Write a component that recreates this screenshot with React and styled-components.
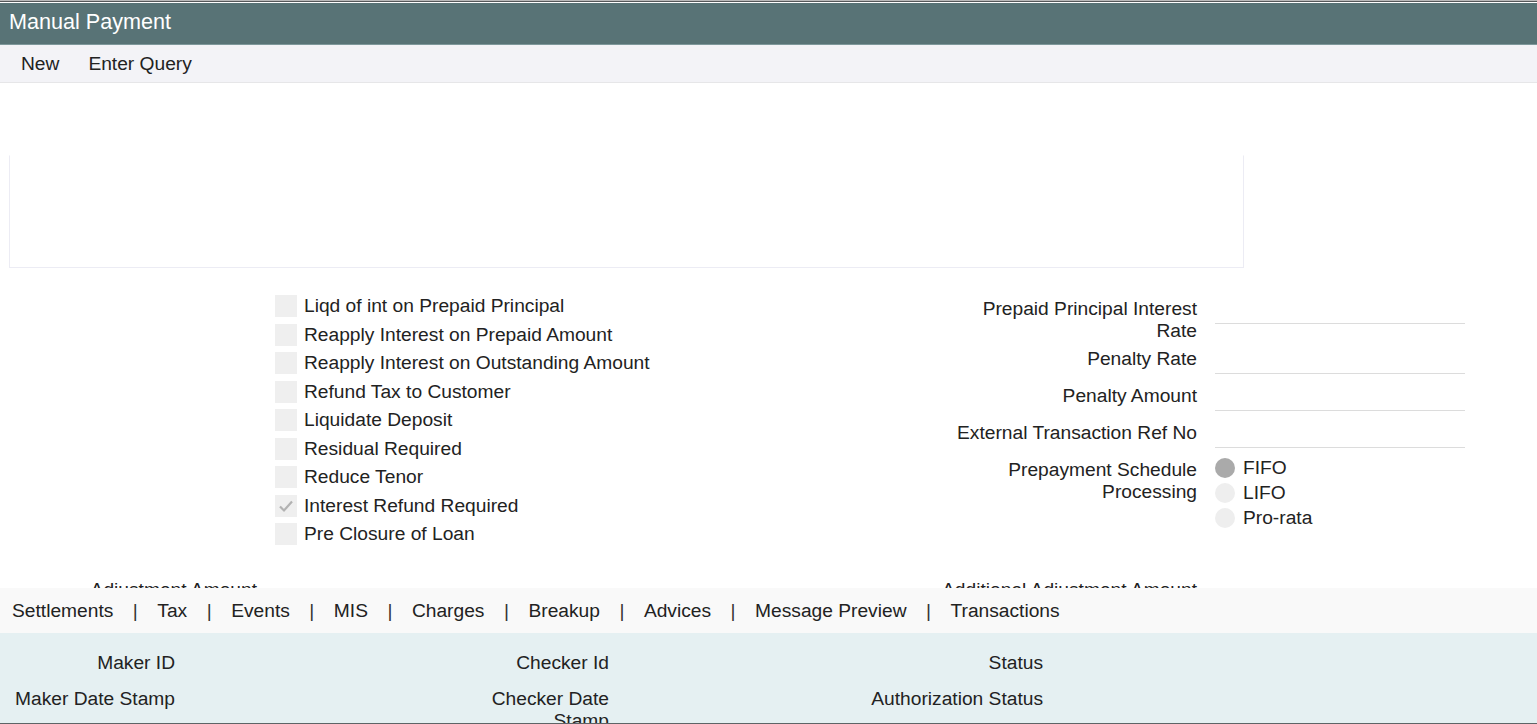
import React from 'react';
import styled, { createGlobalStyle } from 'styled-components';

const GlobalStyle = createGlobalStyle`
  html, body {
    margin: 0;
    padding: 0;
    background: #fff;
  }
  body {
    font-family: "Liberation Sans", Arial, sans-serif;
    color: #222;
  }
`;

const checks = [
  { label: 'Liqd of int on Prepaid Principal' },
  { label: 'Reapply Interest on Prepaid Amount' },
  { label: 'Reapply Interest on Outstanding Amount' },
  { label: 'Refund Tax to Customer' },
  { label: 'Liquidate Deposit' },
  { label: 'Residual Required' },
  { label: 'Reduce Tenor' },
  { label: 'Interest Refund Required', checked: true },
  { label: 'Pre Closure of Loan' },
];

const fields = [
  'Prepaid Principal Interest Rate',
  'Penalty Rate',
  'Penalty Amount',
  'External Transaction Ref No',
];

const radios = [
  { label: 'FIFO', selected: true },
  { label: 'LIFO' },
  { label: 'Pro-rata' },
];

const tabs = ['Settlements', 'Tax', 'Events', 'MIS', 'Charges', 'Breakup', 'Advices', 'Message Preview', 'Transactions'];

const audit = [
  ['Maker ID', 'Checker Id', 'Status'],
  ['Maker Date Stamp', 'Checker Date Stamp', 'Authorization Status'],
];

const App = () => {
  return (
    <>
      <GlobalStyle />
      <Window>
        <TitleBar>Manual Payment</TitleBar>
        <Toolbar>
          <ToolButton>New</ToolButton>
          <ToolButton>Enter Query</ToolButton>
        </Toolbar>

        <Main>
          <HeaderBox />

          <FormGrid>
            <CheckList>
              {checks.map(c => (
                <CheckRow key={c.label}>
                  <CheckBox>
                    {c.checked && (
                      <svg width="18" height="18" viewBox="0 0 18 18">
                        <path d="M3 9.5 L7 13.5 L15 4.5" fill="none" stroke="#b2b2b2" strokeWidth="2.2" />
                      </svg>
                    )}
                  </CheckBox>
                  <span>{c.label}</span>
                </CheckRow>
              ))}
            </CheckList>

            <FieldList>
              {fields.map(f => (
                <FieldRow key={f}>
                  <FieldLabel>{f}</FieldLabel>
                  <TextInput />
                </FieldRow>
              ))}
              <FieldRow>
                <FieldLabel>Prepayment Schedule Processing</FieldLabel>
                <RadioGroup>
                  {radios.map(r => (
                    <RadioRow key={r.label}>
                      <RadioDot $selected={r.selected} />
                      <span>{r.label}</span>
                    </RadioRow>
                  ))}
                </RadioGroup>
              </FieldRow>
            </FieldList>

            <FieldRow>
              <FieldLabel $width="240px">Adjustment Amount</FieldLabel>
              <TextInput />
            </FieldRow>
            <FieldRow>
              <FieldLabel>Additional Adjustment Amount</FieldLabel>
              <TextInput />
            </FieldRow>
          </FormGrid>
        </Main>

        <TabBar>
          {tabs.map((t, i) => (
            <React.Fragment key={t}>
              {i > 0 && <TabSep>|</TabSep>}
              <Tab>{t}</Tab>
            </React.Fragment>
          ))}
        </TabBar>

        <AuditPanel>
          {audit.map((row, i) => (
            <AuditRow key={i}>
              {row.map(label => (
                <AuditCell key={label}>
                  <AuditLabel>{label}</AuditLabel>
                  <AuditValue />
                </AuditCell>
              ))}
            </AuditRow>
          ))}
        </AuditPanel>
      </Window>
    </>
  );
};

const Window = styled.div`
  height: 724px;
  display: flex;
  flex-direction: column;
  overflow: hidden;
  border-top: 1px solid #b9b9b9;
  box-sizing: border-box;
  font-size: 19.2px;
`;

const TitleBar = styled.div`
  border-top: 1px solid #56585a;
  border-bottom: 1px solid #7e989b;
  box-shadow: inset 0 1px 0 #fff;
  padding: 1px 9px 0;
  height: 41px;
  line-height: 38px;
  background: #587376;
  color: #fff;
  font-size: 21.6px;
  flex-shrink: 0;
`;

const Toolbar = styled.div`
  display: flex;
  align-items: center;
  gap: 29px;
  height: 37px;
  padding: 0 21px;
  background: #f3f3f7;
  border-bottom: 1px solid #e6e6e8;
  flex-shrink: 0;
`;

const ToolButton = styled.span`
  color: #222;
`;

const Main = styled.div`
  height: 505px;
  overflow: hidden;
  flex-shrink: 0;
`;

const HeaderBox = styled.div`
  margin: 72px 0 0 9px;
  width: 1233px;
  height: 111px;
  border: 1px solid #ececf4;
  border-top-color: #fff;
`;

const FormGrid = styled.div`
  display: grid;
  grid-template-columns: 920px 1fr;
  row-gap: 26px;
  margin: 24px 0 0 17px;
`;

const CheckList = styled.div`
  display: flex;
  flex-direction: column;
  padding-left: 258px;
`;

const CheckRow = styled.label`
  display: flex;
  align-items: center;
  gap: 7px;
  height: 28.5px;
  color: #222;
`;

const CheckBox = styled.span`
  width: 22px;
  height: 22px;
  background: #efefef;
  display: flex;
  align-items: center;
  justify-content: center;
`;

const FieldList = styled.div`
  display: flex;
  flex-direction: column;
  padding-top: 2px;
`;

const FieldRow = styled.div`
  display: flex;
  align-items: flex-start;
  gap: 18px;
  margin-bottom: 7px;
`;

const FieldLabel = styled.div`
  width: ${p => p.$width || '260px'};
  text-align: right;
  line-height: 22px;
  padding-top: 4px;
  margin-bottom: -5px;
  color: #222;
`;

const TextInput = styled.div`
  width: 250px;
  height: 29px;
  border-bottom: 1px solid #dcdcdc;
`;

const RadioGroup = styled.div`
  display: flex;
  flex-direction: column;
`;

const RadioRow = styled.div`
  display: flex;
  align-items: center;
  gap: 8px;
  height: 25px;
`;

const RadioDot = styled.span`
  width: 20px;
  height: 20px;
  border-radius: 50%;
  background: ${p => (p.$selected ? '#aaaaaa' : '#eeeeee')};
`;

const TabBar = styled.div`
  display: flex;
  align-items: center;
  height: 45px;
  padding: 0 12px;
  background: #f9f9f9;
  flex-shrink: 0;
`;

const Tab = styled.span`
  color: #222;
`;

const TabSep = styled.span`
  margin: 0 19.5px;
  color: #333;
`;

const AuditPanel = styled.div`
  flex: 1;
  background: #e5f0f2;
  padding: 19px 0 0 3px;
  display: flex;
  flex-direction: column;
  gap: 14px;
  border-bottom: 1px solid #5d6466;
  overflow: hidden;
`;

const AuditRow = styled.div`
  display: flex;
`;

const AuditCell = styled.div`
  display: flex;
  width: 434px;
`;

const AuditLabel = styled.div`
  width: 172px;
  text-align: right;
  line-height: 22px;
  color: #222;
`;

const AuditValue = styled.div`
  flex: 1;
`;

export default App;
